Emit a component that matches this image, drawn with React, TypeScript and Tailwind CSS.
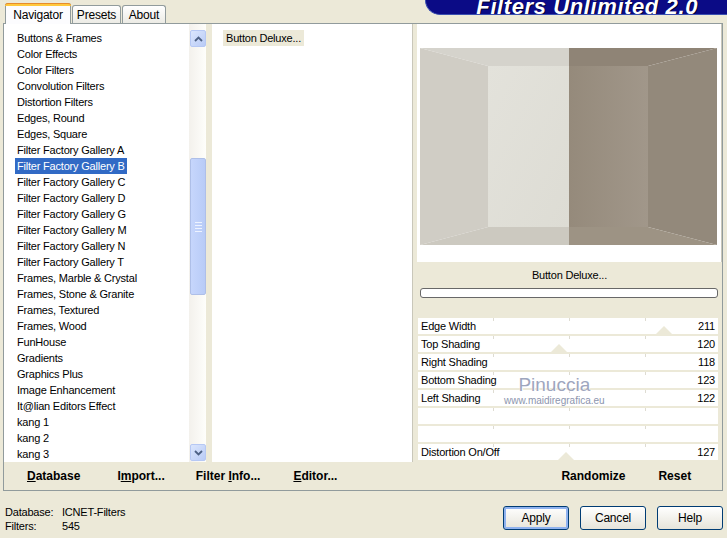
import React from 'react'

const filters = [
  'Buttons & Frames',
  'Color Effects',
  'Color Filters',
  'Convolution Filters',
  'Distortion Filters',
  'Edges, Round',
  'Edges, Square',
  'Filter Factory Gallery A',
  'Filter Factory Gallery B',
  'Filter Factory Gallery C',
  'Filter Factory Gallery D',
  'Filter Factory Gallery G',
  'Filter Factory Gallery M',
  'Filter Factory Gallery N',
  'Filter Factory Gallery T',
  'Frames, Marble & Crystal',
  'Frames, Stone & Granite',
  'Frames, Textured',
  'Frames, Wood',
  'FunHouse',
  'Gradients',
  'Graphics Plus',
  'Image Enhancement',
  'It@lian Editors Effect',
  'kang 1',
  'kang 2',
  'kang 3',
]

const sliders: { label: string; value?: number; marker?: number }[] = [
  { label: 'Edge Width', value: 211, marker: 246 },
  { label: 'Top Shading', value: 120, marker: 141 },
  { label: 'Right Shading', value: 118 },
  { label: 'Bottom Shading', value: 123 },
  { label: 'Left Shading', value: 122 },
  { label: '' },
  { label: '' },
  { label: 'Distortion On/Off', value: 127, marker: 148 },
]

const Chevron = ({ down }: { down?: boolean }) => (
  <svg width="9" height="6" viewBox="0 0 9 6" className={down ? 'rotate-180' : ''}>
    <path d="M1 5 L4.5 1.5 L8 5" fill="none" stroke="#4d6185" strokeWidth="1.8" />
  </svg>
)

const ScrollBtn = ({ down }: { down?: boolean }) => (
  <div className="h-[17px] w-[16px] rounded-[2px] border border-[#b6c8f4] bg-gradient-to-br from-[#dbe6fd] to-[#b9cbf6] flex items-center justify-center">
    <Chevron down={down} />
  </div>
)

const Preview = () => (
  <svg width="297" height="197" viewBox="0 0 297 197" className="block">
    <defs>
      <linearGradient id="innerL" x1="0" y1="0" x2="1" y2="1">
        <stop offset="0" stopColor="#e3e2db" />
        <stop offset="1" stopColor="#dddcd4" />
      </linearGradient>
      <linearGradient id="innerR" x1="0" y1="0" x2="1" y2="0">
        <stop offset="0" stopColor="#958a7b" />
        <stop offset="1" stopColor="#a1978a" />
      </linearGradient>
    </defs>
    <polygon points="0,0 149,0 149,18 68,18" fill="#d5d3cc" />
    <polygon points="0,0 68,18 68,179 0,197" fill="#d0cdc5" />
    <polygon points="0,197 68,179 149,179 149,197" fill="#ccc9c0" />
    <rect x="68" y="18" width="81" height="161" fill="url(#innerL)" />
    <polygon points="149,0 297,0 228,18 149,18" fill="#8f8476" />
    <polygon points="297,0 297,197 228,179 228,18" fill="#93897b" />
    <polygon points="149,179 228,179 297,197 149,197" fill="#9d9384" />
    <rect x="149" y="18" width="79" height="161" fill="url(#innerR)" />
  </svg>
)

const XpButton = ({ label, focused }: { label: string; focused?: boolean }) => (
  <button
    className={`h-[24px] w-[66px] rounded-[3px] border border-[#003c74] bg-gradient-to-b from-white to-[#e6e4da] text-[12px] text-black ${
      focused ? 'shadow-[inset_0_0_0_2px_#8fb2ef]' : ''
    }`}
  >
    {label}
  </button>
)

export default function App() {
  return (
    <div className="relative w-[727px] h-[538px] overflow-hidden bg-[#ece9d8] text-black font-['Liberation_Sans',Arial,sans-serif] text-[11px] tracking-[-0.2px]">
      {/* header with tabs and logo */}
      <div className="flex h-[23px] items-start">
        <div className="flex items-end h-[23px] pl-[5px]">
          <div className="relative h-[21px] w-[66px] border border-b-0 border-[#919b9c] rounded-t-[3px] bg-[#fcfcfe] flex items-center justify-center text-[12px] -mb-[1px] z-10">
            <div className="absolute -top-[1px] -left-[1px] -right-[1px] h-[3px] rounded-t-[3px] bg-[#ffc83c] border-t border-[#e68b2c]" />
            <span className="pt-[2px]">Navigator</span>
          </div>
          <div className="ml-[1px] h-[18px] w-[49px] border border-b-0 border-[#919b9c] rounded-t-[3px] bg-gradient-to-b from-white to-[#ecebe5] flex items-center justify-center text-[12px]">
            Presets
          </div>
          <div className="ml-[1px] h-[18px] w-[44px] border border-b-0 border-[#919b9c] rounded-t-[3px] bg-gradient-to-b from-white to-[#ecebe5] flex items-center justify-center text-[12px]">
            About
          </div>
        </div>
        <div className="ml-auto h-[15px] w-[302px] rounded-bl-[30px] bg-[#0b0b86] border-b border-l border-[#3a4fb0] overflow-hidden flex items-end justify-end pr-[29px]">
          <span className="text-white italic font-bold text-[22px] leading-[22px] tracking-[0.6px] -mb-[4px] [text-shadow:1px_1px_0_#000030]">
            Filters Unlimited 2.0
          </span>
        </div>
      </div>

      {/* tab panel */}
      <div className="ml-[3px] w-[720px] h-[468px] border border-[#919b9c] bg-[#ece9d8] flex flex-col">
        <div className="flex h-[438px]">
          {/* filter list */}
          <div className="w-[202px] bg-white flex">
            <div className="flex-1 pt-[6px]">
              {filters.map(f => (
                <div key={f} className="h-[16px] flex items-center">
                  <span
                    className={`ml-[11px] px-[2px] leading-[16px] whitespace-nowrap ${
                      f === 'Filter Factory Gallery B' ? 'bg-[#316ac5] text-white' : ''
                    }`}
                  >
                    {f}
                  </span>
                </div>
              ))}
            </div>
            <div className="w-[17px] flex flex-col pt-[6px] pb-[1px] bg-gradient-to-r from-[#f3f1ec] to-[#fefefb] pl-[1px]">
              <ScrollBtn />
              <div className="h-[111px]" />
              <div className="h-[137px] w-[16px] rounded-[2px] border border-[#aebfe8] bg-gradient-to-r from-[#c6d6fc] to-[#b8cbf7] flex flex-col items-center justify-center gap-[2px]">
                <div className="h-px w-[7px] bg-[#eef3ff]" />
                <div className="h-px w-[7px] bg-[#eef3ff]" />
                <div className="h-px w-[7px] bg-[#eef3ff]" />
                <div className="h-px w-[7px] bg-[#eef3ff]" />
              </div>
              <div className="flex-1" />
              <ScrollBtn down />
            </div>
          </div>

          <div className="w-[6px]" />

          {/* filter items */}
          <div className="w-[201px] bg-white border-r border-[#c9c7ba] pt-[6px]">
            <div className="h-[16px] flex items-center">
              <span className="ml-[11px] px-[3px] leading-[16px] bg-[#ece9d8]">Button Deluxe...</span>
            </div>
          </div>

          <div className="w-[4px]" />

          {/* preview + controls */}
          <div className="w-[305px] flex flex-col">
            <div className="h-[238px] bg-white pt-[24px] pl-[3px] border-r border-[#c9c7ba]">
              <Preview />
            </div>
            <div className="h-[56px] flex flex-col items-center">
              <div className="h-[26px] flex items-center text-[11px]">Button Deluxe...</div>
              <div className="ml-[3px] self-start h-[10px] w-[298px] rounded-[3px] border border-[#686868] bg-white" />
            </div>
            <div className="flex flex-col gap-[2px] pl-[1px] pr-[4px]">
              {sliders.map((s, i) => (
                <div key={i} className="relative h-[16px] bg-white flex items-center justify-between px-[3px]">
                  <div className="absolute top-0 left-[75px] h-[3px] w-px bg-[#dedcd2]" />
                  <div className="absolute top-0 left-[151px] h-[3px] w-px bg-[#dedcd2]" />
                  <div className="absolute top-0 left-[227px] h-[3px] w-px bg-[#dedcd2]" />
                  {s.marker !== undefined && (
                    <svg
                      width="16"
                      height="8"
                      viewBox="0 0 16 8"
                      className="absolute bottom-0"
                      style={{ left: s.marker - 8 }}
                    >
                      <polygon points="0,8 8,0 16,8" fill="#ece9d8" />
                    </svg>
                  )}
                  <span className="relative">{s.label}</span>
                  <span className="relative">{s.value}</span>
                </div>
              ))}
            </div>
          </div>
        </div>

        {/* bottom command bar */}
        <div className="flex-1 flex items-center font-bold text-[12px] tracking-normal">
          <span className="ml-[23px]"><span className="underline">D</span>atabase</span>
          <span className="ml-[37px]">I<span className="underline">m</span>port...</span>
          <span className="ml-[31px]">Filter <span className="underline">I</span>nfo...</span>
          <span className="ml-[33px]"><span className="underline">E</span>ditor...</span>
          <span className="ml-[224px]">Randomize</span>
          <span className="ml-[33px]">Reset</span>
        </div>
      </div>

      {/* footer */}
      <div className="flex items-start">
        <div className="ml-[5px] mt-[14px] grid grid-cols-[57px_auto] leading-[14px] text-[11px]">
          <span>Database:</span>
          <span>ICNET-Filters</span>
          <span>Filters:</span>
          <span>545</span>
        </div>
        <div className="ml-auto mr-[4px] mt-[15px] flex gap-[11px]">
          <XpButton label="Apply" focused />
          <XpButton label="Cancel" />
          <XpButton label="Help" />
        </div>
      </div>

      {/* watermark */}
      <div className="absolute left-[504px] top-[375px] flex flex-col items-center pointer-events-none tracking-normal">
        <span className="text-[19px] leading-[20px] text-[#9ea6be] [text-shadow:0_0_1px_#ffffff,1px_1px_0_#ffffff]">Pinuccia</span>
        <span className="text-[10px] leading-[12px] text-[#8c95ae] [text-shadow:0_0_1px_#ffffff]">www.maidiregrafica.eu</span>
      </div>
    </div>
  )
}
